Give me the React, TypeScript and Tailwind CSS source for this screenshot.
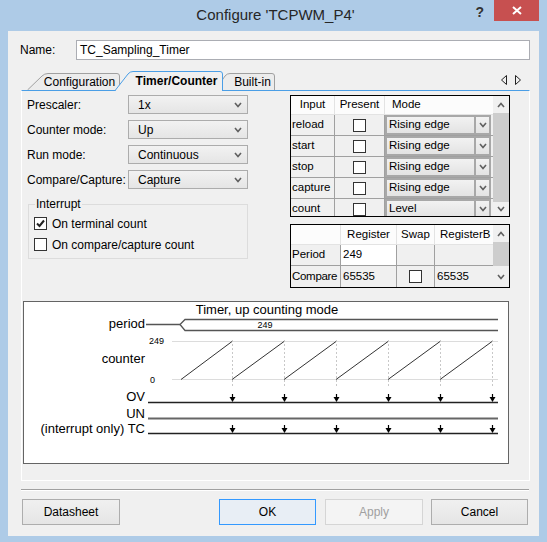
import React from 'react'

const inputs = [
  { name: 'reload', mode: 'Rising edge' },
  { name: 'start', mode: 'Rising edge' },
  { name: 'stop', mode: 'Rising edge' },
  { name: 'capture', mode: 'Rising edge' },
  { name: 'count', mode: 'Level' },
]

const settings = [
  { label: 'Prescaler:', value: '1x' },
  { label: 'Counter mode:', value: 'Up' },
  { label: 'Run mode:', value: 'Continuous' },
  { label: 'Compare/Capture:', value: 'Capture' },
]

// counter period boundaries in the waveform (x inside the chart svg)
const ticks = [208, 260, 312, 364, 416, 468]

const ChevronDown = () => (
  <svg width="8" height="6" viewBox="0 0 8 6">
    <polyline points="1,1 4,4.5 7,1" fill="none" stroke="#606060" strokeWidth="1.6" />
  </svg>
)

const ChevronUp = () => (
  <svg width="8" height="6" viewBox="0 0 8 6">
    <polyline points="1,5 4,1.5 7,5" fill="none" stroke="#606060" strokeWidth="1.6" />
  </svg>
)

const Checkbox = ({ checked = false }: { checked?: boolean }) => (
  <div className="w-[13px] h-[13px] border border-[#333] bg-white flex items-center justify-center shrink-0">
    {checked && (
      <svg width="9" height="9" viewBox="0 0 9 9">
        <polyline points="1,4.5 3.5,7 8,1.5" fill="none" stroke="#222" strokeWidth="2" />
      </svg>
    )}
  </div>
)

const Select = ({ value }: { value: string }) => (
  <div className="w-[120px] h-[19px] border border-[#acacac] bg-linear-to-b from-[#f2f2f2] to-[#e5e5e5] flex items-center pl-[9px] pr-[5px]">
    <span className="flex-1">{value}</span>
    <ChevronDown />
  </div>
)

const Scrollbar = ({ thumb }: { thumb: number }) => (
  <div className="w-[16px] flex flex-col bg-[#f0f0f0] shrink-0">
    <div className="h-[17px] flex items-center justify-center shrink-0">
      <ChevronUp />
    </div>
    <div className="bg-[#cdcdcd] shrink-0" style={{ height: thumb }} />
    <div className="flex-1 flex items-center justify-center">
      <ChevronDown />
    </div>
  </div>
)

const Arrow = ({ x, y }: { x: number; y: number }) => (
  <g>
    <line x1={x} y1={y - 8} x2={x} y2={y - 3} stroke="#000" strokeWidth="1.2" />
    <polygon points={`${x - 3},${y - 5} ${x + 3},${y - 5} ${x},${y}`} fill="#000" />
  </g>
)

const Button = ({ label, className }: { label: string; className: string }) => (
  <div className={`h-[26px] flex items-center justify-center border ${className}`}>{label}</div>
)

const App = () => {
  return (
    <div
      className="w-[547px] h-[542px] bg-[#aecbe7] flex flex-col px-2 pb-[6px] text-[12px] text-black"
      style={{ fontFamily: '"Liberation Sans", Arial, sans-serif' }}
    >
      {/* title bar */}
      <div className="h-[31px] relative flex items-center justify-center shrink-0">
        <span className="text-[15px] text-[#262626] ml-[4px]">Configure 'TCPWM_P4'</span>
        <div className="absolute right-0 top-0 flex items-start">
          <span className="text-[14px] font-bold text-[#333] mt-[2px] mr-[10px]">?</span>
          <div className="w-[45px] h-[21px] bg-[#c75050] flex items-center justify-center">
            <svg width="10" height="9" viewBox="0 0 10 9">
              <path d="M1,1 L9,8 M9,1 L1,8" stroke="#fff" strokeWidth="2" />
            </svg>
          </div>
        </div>
      </div>

      {/* client */}
      <div className="flex-1 bg-[#f0f0f0] flex flex-col">
        <div className="flex items-center pt-[9px] pl-3 pr-[9px]">
          <span className="w-[56px]">Name:</span>
          <div className="flex-1 h-[20px] border border-[#abadb3] bg-white flex items-center pl-[3px]">
            TC_Sampling_Timer
          </div>
        </div>

        {/* tabs */}
        <div className="mt-[11px] ml-[13px] mr-[9px] h-[19px] flex items-end pl-[6px] relative z-10">
          <div className="relative w-[93px] h-[17px] flex items-center justify-center pl-[12px]">
            <svg className="absolute inset-0" width="93" height="17" viewBox="0 0 93 17">
              <path d="M0.5,17 L15,3 Q17.5,0.5 21,0.5 L90,0.5 Q92.5,0.5 92.5,3 L92.5,17" fill="#ececec" stroke="#a0a0a0" />
            </svg>
            <span className="relative">Configuration</span>
          </div>
          <div className="relative z-20 -ml-[5px] w-[108px] h-[20px] -mb-[1px] flex items-center justify-center pl-[15px]">
            <svg className="absolute inset-0" width="108" height="20" viewBox="0 0 108 20">
              <path d="M0,20 L0.5,19 L13,3 Q15,0.5 18,0.5 L105,0.5 Q107.5,0.5 107.5,3 L107.5,20" fill="#f0f0f0" stroke="#4a9ee6" />
            </svg>
            <span className="relative font-bold">Timer/Counter</span>
          </div>
          <div className="relative z-10 -ml-[8px] w-[60px] h-[17px] flex items-center justify-center pl-[15px]">
            <svg className="absolute inset-0" width="60" height="17" viewBox="0 0 60 17">
              <path d="M0.5,17 L10,3 Q12,0.5 15,0.5 L57,0.5 Q59.5,0.5 59.5,3 L59.5,17" fill="#ececec" stroke="#a0a0a0" />
            </svg>
            <span className="relative">Built-in</span>
          </div>
          <div className="ml-auto self-start mt-[4px] flex gap-[8px] mr-[9px]">
            <svg width="6" height="10" viewBox="0 0 6 10">
              <polygon points="5.5,0.5 0.5,5 5.5,9.5" fill="none" stroke="#222" />
            </svg>
            <svg width="6" height="10" viewBox="0 0 6 10">
              <polygon points="0.5,0.5 5.5,5 0.5,9.5" fill="none" stroke="#222" />
            </svg>
          </div>
        </div>

        {/* tab page */}
        <div className="ml-[13px] mr-[9px] h-[391px] border-t border-t-[#4a9ee6] border-l border-r border-b border-white flex flex-col">
          <div className="flex pt-[4px]">
            <div className="w-[268px] pl-[5px] flex flex-col">
              <div className="flex flex-col gap-[6px]">
                {settings.map((s) => (
                  <div key={s.label} className="flex items-center h-[19px]">
                    <span className="w-[101px]">{s.label}</span>
                    <Select value={s.value} />
                  </div>
                ))}
              </div>
              <fieldset className="mt-[8px] ml-[1px] w-[220px] border border-[#dcdcdc] px-[5px] pb-[7px]">
                <legend className="ml-[1px] px-[1px] leading-[14px]">Interrupt</legend>
                <div className="mt-[6px] flex items-center gap-[5px] h-[13px]">
                  <Checkbox checked />
                  <span>On terminal count</span>
                </div>
                <div className="mt-[8px] flex items-center gap-[5px] h-[13px]">
                  <Checkbox />
                  <span>On compare/capture count</span>
                </div>
              </fieldset>
            </div>

            <div className="flex flex-col text-[11.5px]">
              {/* inputs table */}
              <div className="w-[220px] h-[122px] border border-black bg-[#f0f0f0] flex overflow-hidden">
                <div className="w-[202px] flex flex-col">
                  <div className="h-[19px] flex bg-[#fcfcfc] border-b border-[#e3e3e3] shrink-0">
                    <div className="w-[44px] border-r border-[#e3e3e3] flex items-center justify-center">Input</div>
                    <div className="w-[50px] border-r border-[#e3e3e3] flex items-center justify-center">Present</div>
                    <div className="flex-1 flex items-center pl-[7px]">Mode</div>
                  </div>
                  {inputs.map((r) => (
                    <div key={r.name} className="h-[21px] flex border-b border-[#a0a0a0] shrink-0">
                      <div className="w-[44px] border-r border-[#a0a0a0] flex items-center pl-[1px]">{r.name}</div>
                      <div className="w-[50px] border-r border-[#a0a0a0] flex items-center justify-center">
                        <Checkbox />
                      </div>
                      <div className="w-[106px] border-2 border-[#a8a8a8] bg-linear-to-b from-[#f2f2f2] to-[#e3e3e3] flex">
                        <span className="flex-1 flex items-center pl-[2px]">{r.mode}</span>
                        <div className="w-[15px] border-l-2 border-[#a8a8a8] flex items-center justify-center">
                          <ChevronDown />
                        </div>
                      </div>
                    </div>
                  ))}
                </div>
                <Scrollbar thumb={89} />
              </div>

              {/* registers table */}
              <div className="mt-[7px] w-[220px] h-[64px] border border-black bg-[#f0f0f0] flex overflow-hidden">
                <div className="w-[202px] flex flex-col">
                  <div className="h-[20px] flex bg-[#fcfcfc] border-b border-[#e3e3e3] shrink-0">
                    <div className="w-[50px] border-r border-[#e3e3e3]" />
                    <div className="w-[56px] border-r border-[#e3e3e3] flex items-center justify-center">Register</div>
                    <div className="w-[38px] border-r border-[#e3e3e3] flex items-center justify-center">Swap</div>
                    <div className="flex-1 flex items-center pl-[5px] overflow-hidden whitespace-nowrap">RegisterB</div>
                  </div>
                  <div className="h-[21px] flex border-b border-[#a0a0a0] shrink-0">
                    <div className="w-[50px] border-r border-[#a0a0a0] flex items-center pl-[1px] overflow-hidden">Period</div>
                    <div className="w-[56px] border-r border-[#a0a0a0] bg-white flex items-center pl-[2px]">249</div>
                    <div className="w-[38px] border-r border-[#a0a0a0]" />
                    <div className="flex-1" />
                  </div>
                  <div className="h-[21px] flex shrink-0">
                    <div className="w-[50px] border-r border-[#a0a0a0] flex items-center pl-[1px] overflow-hidden whitespace-nowrap tracking-[-0.3px]">Compare</div>
                    <div className="w-[56px] border-r border-[#a0a0a0] flex items-center pl-[2px]">65535</div>
                    <div className="w-[38px] border-r border-[#a0a0a0] flex items-center justify-center">
                      <Checkbox />
                    </div>
                    <div className="flex-1 flex items-center pl-[2px]">65535</div>
                  </div>
                </div>
                <Scrollbar thumb={24} />
              </div>
            </div>
          </div>

          {/* waveform */}
          <div className="mt-[13px] ml-[1px] w-[486px] h-[163px] border border-[#646464] bg-white">
            <svg width="484" height="161" viewBox="0 0 484 161" style={{ fontFamily: '"Liberation Sans", Arial, sans-serif' }}>
              <text x="243" y="12" fontSize="13" textAnchor="middle" fill="#000">Timer, up counting mode</text>

              <text x="121" y="26" fontSize="13" textAnchor="end" fill="#000">period</text>
              <line x1="122" y1="22.5" x2="156" y2="22.5" stroke="#555" strokeWidth="1.3" />
              <polyline points="474,17.5 161,17.5 156,22.5 161,28.5 474,28.5" fill="none" stroke="#555" strokeWidth="1.3" />
              <text x="241" y="26" fontSize="9" textAnchor="middle" fill="#000">249</text>

              <text x="125" y="42" fontSize="9" fill="#000">249</text>
              <text x="126" y="80.5" fontSize="9" fill="#000">0</text>
              <line x1="148" y1="39.5" x2="474" y2="39.5" stroke="#dcdcdc" />
              <line x1="148" y1="77.5" x2="474" y2="77.5" stroke="#dcdcdc" />
              <text x="121" y="61" fontSize="13" textAnchor="end" fill="#000">counter</text>
              {ticks.map((x) => (
                <line key={x} x1={x + 0.5} y1="38" x2={x + 0.5} y2="86" stroke="#c8c8c8" strokeDasharray="2 2" />
              ))}
              {[157, ...ticks.slice(0, -1)].map((x, i) => (
                <line key={x} x1={x} y1="77.5" x2={ticks[i]} y2="39.5" stroke="#333" />
              ))}

              <text x="121" y="99" fontSize="13" textAnchor="end" fill="#000">OV</text>
              <line x1="124" y1="100.5" x2="474" y2="100.5" stroke="#222" strokeWidth="1.4" />
              {ticks.map((x) => (
                <Arrow key={x} x={x + 0.5} y={100} />
              ))}

              <text x="121" y="116" fontSize="13" textAnchor="end" fill="#000">UN</text>
              <line x1="124" y1="116.5" x2="474" y2="116.5" stroke="#666" strokeWidth="2" />

              <text x="121" y="131" fontSize="13" textAnchor="end" fill="#000">(interrupt only) TC</text>
              <line x1="124" y1="131.5" x2="474" y2="131.5" stroke="#222" strokeWidth="1.4" />
              {ticks.map((x) => (
                <Arrow key={x} x={x + 0.5} y={131} />
              ))}
            </svg>
          </div>
        </div>

        {/* separator */}
        <div className="mt-[8px] ml-[13px] mr-[10px] h-[2px] border-t border-[#a0a0a0] border-b border-b-white" />

        {/* buttons */}
        <div className="mt-[8px] flex">
          <Button label="Datasheet" className="ml-[14px] w-[98px] border-[#adadad] bg-linear-to-b from-[#f0f0f0] to-[#e5e5e5]" />
          <div className="ml-auto mr-[11px] flex">
            <Button label="OK" className="w-[97px] border-[#3399ff] bg-[#e8eef5]" />
            <Button label="Apply" className="ml-[9px] w-[98px] border-[#d5d5d5] bg-[#f4f4f4] text-[#a0a0a0]" />
            <Button label="Cancel" className="ml-[8px] w-[97px] border-[#adadad] bg-linear-to-b from-[#f0f0f0] to-[#e5e5e5]" />
          </div>
        </div>
      </div>
    </div>
  )
}

export default App
